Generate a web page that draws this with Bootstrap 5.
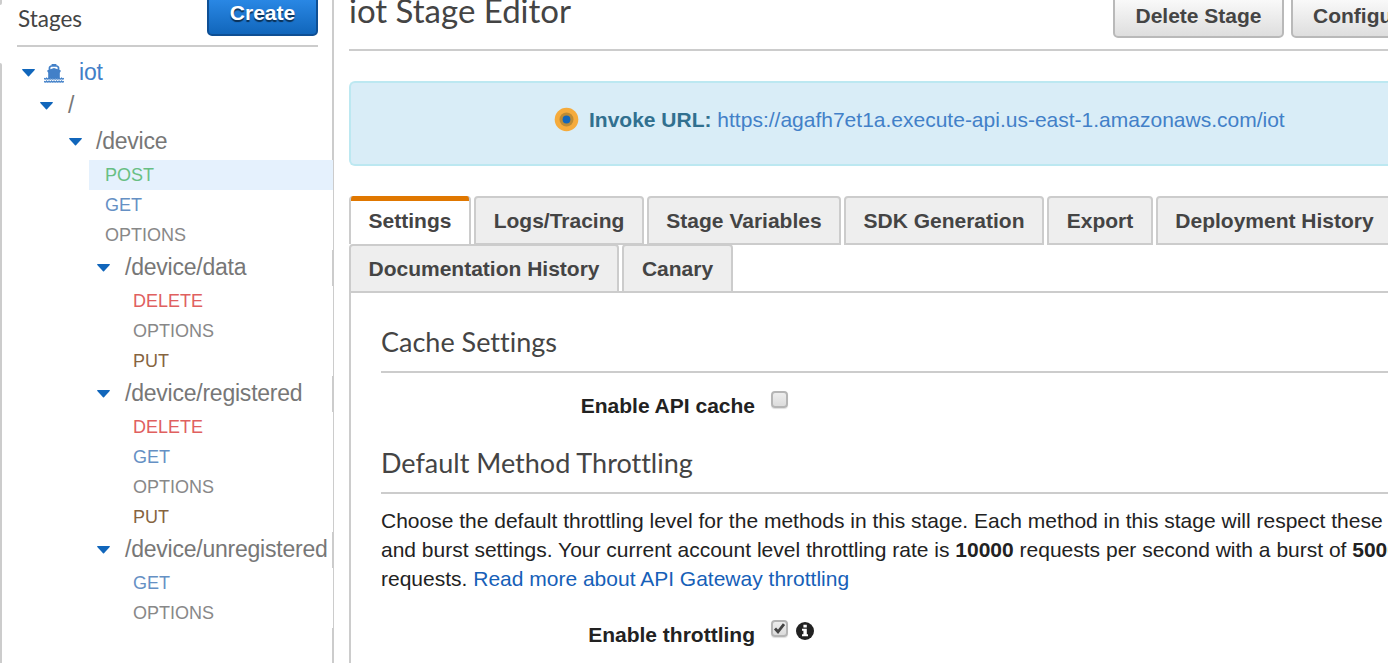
<!DOCTYPE html>
<html lang="en">
<head>
<meta charset="utf-8">
<title>iot Stage Editor</title>
<link href="https://cdn.jsdelivr.net/npm/bootstrap@5.3.0/dist/css/bootstrap.min.css" rel="stylesheet">
<style>
body{font-family:"Liberation Sans",Arial,sans-serif;font-size:21px;line-height:29px;color:#222;height:663px;overflow:hidden;background:#fff}
h1,h2,h3,.stages-title{font-family:Lato,sans-serif;font-weight:400;color:#444;margin:0;white-space:nowrap;font-variant-ligatures:none}
a{text-decoration:none;color:#1660b8}
.rail{width:2px;flex:none}
.rail .top-bit{height:5px;background:#ccc;border-bottom-right-radius:2px}
.rail .low-bit{margin-top:58px;height:600px;background:#ccc;border-top-right-radius:2px}
.side{width:332px;flex:none;height:663px}
.side-head{height:47px;margin:0 14px 0 15px;border-bottom:2px solid #ccc}
.side-edge{border-right:2px solid #ccc}
.stages-title{font-size:22.5px;line-height:27px;margin-top:5px;padding-left:1px}
.btn-create{width:111px;height:46px;margin-top:-10px;padding:0 0 2px;border:2px solid #0e4f94;border-radius:5px;background:linear-gradient(#2f8fee,#1166bb);color:#fff;font-size:21px;font-weight:700;line-height:29px;text-shadow:0 2px 1px rgba(0,0,0,.6)}
.btn-create{padding-top:1px}
.tree-row{height:36px;font-size:23px;letter-spacing:-.23px;line-height:35px;color:#777;white-space:nowrap}
.tree-row span{padding-bottom:2px}
.tree-row .caret{margin-bottom:1px}
.caret{width:13px;height:8px;flex:none;display:block}
.leaf{height:30px;font-size:18px;line-height:30px;background:#fff;margin-right:-1px}
.l-a{margin-left:87px;padding-left:16px}
.l-b{margin-left:115px;padding-left:16px}
.m-post{color:#68bf83}.m-get{color:#6590c4}.m-opt{color:#888}.m-del{color:#e0605f}.m-put{color:#86643f}
.leaf.picked{background:#e5f1fd}
.main-pane{flex:1 1 0;min-width:0;margin-left:15px}
.main-head{height:51px;border-bottom:2px solid #ccc}
.main-head h1{font-size:33px;line-height:40px;margin-top:-10px}
.btn-grey{height:48px;margin-top:-10px;padding:2px 0 0;border:2px solid #b9b9b9;border-radius:5px;background:linear-gradient(#fff,#dedede);color:#444;font-size:21px;font-weight:700;line-height:29px}
.url-box{height:85px;margin-top:30px;border:2px solid #bce8f1;border-right:0;border-radius:6px 0 0 6px;background:#d9edf7;color:#31708f;padding:0 0 7px 203px}
.url-box a{color:#4280c8}
.tabs{margin-top:30px}
.tab-item{height:49px;border:2px solid #ccc;border-radius:4px 4px 0 0;background:#eee;color:#444;font-weight:700;line-height:46px;text-align:center;white-space:nowrap;flex:none}
.tab-on{border-bottom:0;height:48px;background:linear-gradient(#e07700 0 5px,#fff 5px) border-box;border-top:0;line-height:49px}
.panel{border:2px solid #ccc;border-right:0;height:400px;padding:30px 0 0 30px}
.panel h2{font-size:27px;line-height:38px;height:50px;border-bottom:2px solid #ccc}
.field-name{width:374px;margin-right:1px;text-align:right;font-weight:700}
.box{width:17px;height:17px;border:2px solid #b5b5b5;border-radius:4px;background:linear-gradient(#ededed,#dcdcdc);box-shadow:0 1px 1px #ddd;margin-left:15px}
.blurb{white-space:nowrap;margin-top:12px}
</style>
<script src="https://cdn.jsdelivr.net/npm/bootstrap@5.3.0/dist/js/bootstrap.bundle.min.js"></script>
</head>
<body>
<svg width="0" height="0" class="position-absolute"><symbol id="caret" viewBox="0 0 13 8"><path d="M.7 0h11.6q1 0 .4.9L7 7.3q-.5.5-1 0L.3.9Q-.3 0 .7 0z" fill="#1166bb"/></symbol></svg>
<div class="d-flex overflow-hidden">
  <div class="rail"><div class="top-bit"></div><div class="low-bit"></div></div>
  <aside class="side side-edge">
    <div class="side-head d-flex justify-content-between align-items-start">
      <div class="stages-title">Stages</div>
      <button class="btn btn-create d-flex align-items-center justify-content-center">Create</button>
    </div>
    <div class="tree-row d-flex align-items-center" style="margin-top:8px;padding-left:20px"><svg class="caret"><use href="#caret"/></svg>
      <svg width="20" height="19" viewBox="0 0 20 19" style="margin-left:9px" fill="#4280c8"><path d="M7.6 0h4.8v1.2q3 .3 3 3v1.6l1.6 1-1.2 2V14H4.2V8.800L3 6.800l1.600-1V4.200q0-2.700 3-3zM6.400 5.200L10 4l3.600 1.200V4q0-1.200-1.400-1.200H7.800Q6.400 2.800 6.400 4z" fill-rule="evenodd"/><path d="M0 14.300q1.200 1.500 2.500 0 1.200 1.500 2.500 0 1.200 1.500 2.500 0 1.200 1.500 2.500 0 1.200 1.500 2.500 0 1.200 1.500 2.500 0 1.200 1.500 2.500 0 1.200 1.500 2.500 0M0 17.200q1.200 1.500 2.500 0 1.200 1.500 2.500 0 1.200 1.500 2.500 0 1.200 1.500 2.500 0 1.200 1.500 2.500 0 1.200 1.500 2.500 0 1.200 1.500 2.500 0 1.200 1.500 2.500 0" fill="none" stroke="#4280c8" stroke-width="1.400"/></svg>
      <span style="margin-left:15px;color:#4280c8">iot</span></div>
    <div class="tree-row d-flex align-items-center" style="padding-left:38px;height:33px"><svg class="caret" style="margin-bottom:4px"><use href="#caret"/></svg><span style="margin-left:15px;margin-bottom:3px">/</span></div>
    <div class="tree-row d-flex align-items-center" style="padding-left:67px"><svg class="caret"><use href="#caret"/></svg><span style="margin-left:14px">/device</span></div>
    <div class="leaf l-a m-post picked">POST</div>
    <div class="leaf l-a m-get">GET</div>
    <div class="leaf l-a m-opt">OPTIONS</div>
    <div class="tree-row d-flex align-items-center" style="padding-left:95px"><svg class="caret"><use href="#caret"/></svg><span style="margin-left:15px">/device/data</span></div>
    <div class="leaf l-b m-del">DELETE</div>
    <div class="leaf l-b m-opt">OPTIONS</div>
    <div class="leaf l-b m-put">PUT</div>
    <div class="tree-row d-flex align-items-center" style="padding-left:95px"><svg class="caret"><use href="#caret"/></svg><span style="margin-left:15px">/device/registered</span></div>
    <div class="leaf l-b m-del">DELETE</div>
    <div class="leaf l-b m-get">GET</div>
    <div class="leaf l-b m-opt">OPTIONS</div>
    <div class="leaf l-b m-put">PUT</div>
    <div class="tree-row d-flex align-items-center" style="padding-left:95px"><svg class="caret"><use href="#caret"/></svg><span style="margin-left:15px">/device/unregistered</span></div>
    <div class="leaf l-b m-get">GET</div>
    <div class="leaf l-b m-opt">OPTIONS</div>
  </aside>
  <main class="main-pane">
    <div class="main-head d-flex align-items-start">
      <h1>iot Stage Editor</h1>
      <div class="d-flex ms-auto" style="gap:7px;width:275px">
        <button class="btn btn-grey flex-shrink-0 d-flex align-items-center justify-content-center" style="width:171px">Delete Stage</button>
        <button class="btn btn-grey flex-shrink-0 d-flex align-items-center text-nowrap" style="width:220px;padding-left:20px">Configure Tags</button>
      </div>
    </div>
    <div class="url-box d-flex align-items-center">
      <svg width="25" height="25" viewBox="0 0 25 25" style="margin-top:-2px"><circle cx="12.5" cy="12.5" r="11.8" fill="#f5ab3c"/><circle cx="12.5" cy="12.5" r="7" fill="#bd8b35"/><circle cx="12.5" cy="12.5" r="3.9" fill="#1166bb"/></svg>
      <span class="text-nowrap" style="margin:-2px 0 0 10px"><b>Invoke URL:</b> <a href="#">https://agafh7et1a.execute-api.us-east-1.amazonaws.com/iot</a></span>
    </div>
    <div class="tabs d-flex" style="height:48px">
      <div class="tab-item tab-on" style="width:122px;margin-right:3px">Settings</div>
      <div class="tab-item" style="width:170px;margin-right:3px">Logs/Tracing</div>
      <div class="tab-item" style="width:194px;margin-right:3px">Stage Variables</div>
      <div class="tab-item" style="width:200px;margin-right:3px">SDK Generation</div>
      <div class="tab-item" style="width:106px;margin-right:3px">Export</div>
      <div class="tab-item" style="width:237px">Deployment History</div>
    </div>
    <div class="d-flex" style="height:47px">
      <div class="tab-item" style="width:270px;margin-right:3px">Documentation History</div>
      <div class="tab-item" style="width:111px">Canary</div>
    </div>
    <div class="panel">
      <h2>Cache Settings</h2>
      <div class="d-flex" style="height:71px;padding-top:18px"><span class="field-name">Enable API cache</span><span class="box"></span></div>
      <h2>Default Method Throttling</h2>
      <p class="blurb mb-0">Choose the default throttling level for the methods in this stage. Each method in this stage will respect these rate<br>and burst settings. Your current account level throttling rate is <b>10000</b> requests per second with a burst of <b>5000</b><br>requests. <a href="#">Read more about API Gateway throttling</a></p>
      <div class="d-flex" style="padding-top:27px"><span class="field-name">Enable throttling</span><span class="box d-flex"><svg width="13" height="13" viewBox="0 0 13 13"><path d="M2 6.5l3 3.3 6-7.6" fill="none" stroke="#444" stroke-width="2.8"/></svg></span>
      <svg width="18" height="18" viewBox="0 0 18 18" style="margin:2px 0 0 8px"><circle cx="9" cy="9" r="9" fill="#222"/><path d="M7.4 2.800h3.400v2.700H7.400zM6 6.800h4.800v5.500H12v2H6v-2h1.400V8.800H6z" fill="#fff"/></svg></div>
    </div>
  </main>
</div>
</body>
</html>
